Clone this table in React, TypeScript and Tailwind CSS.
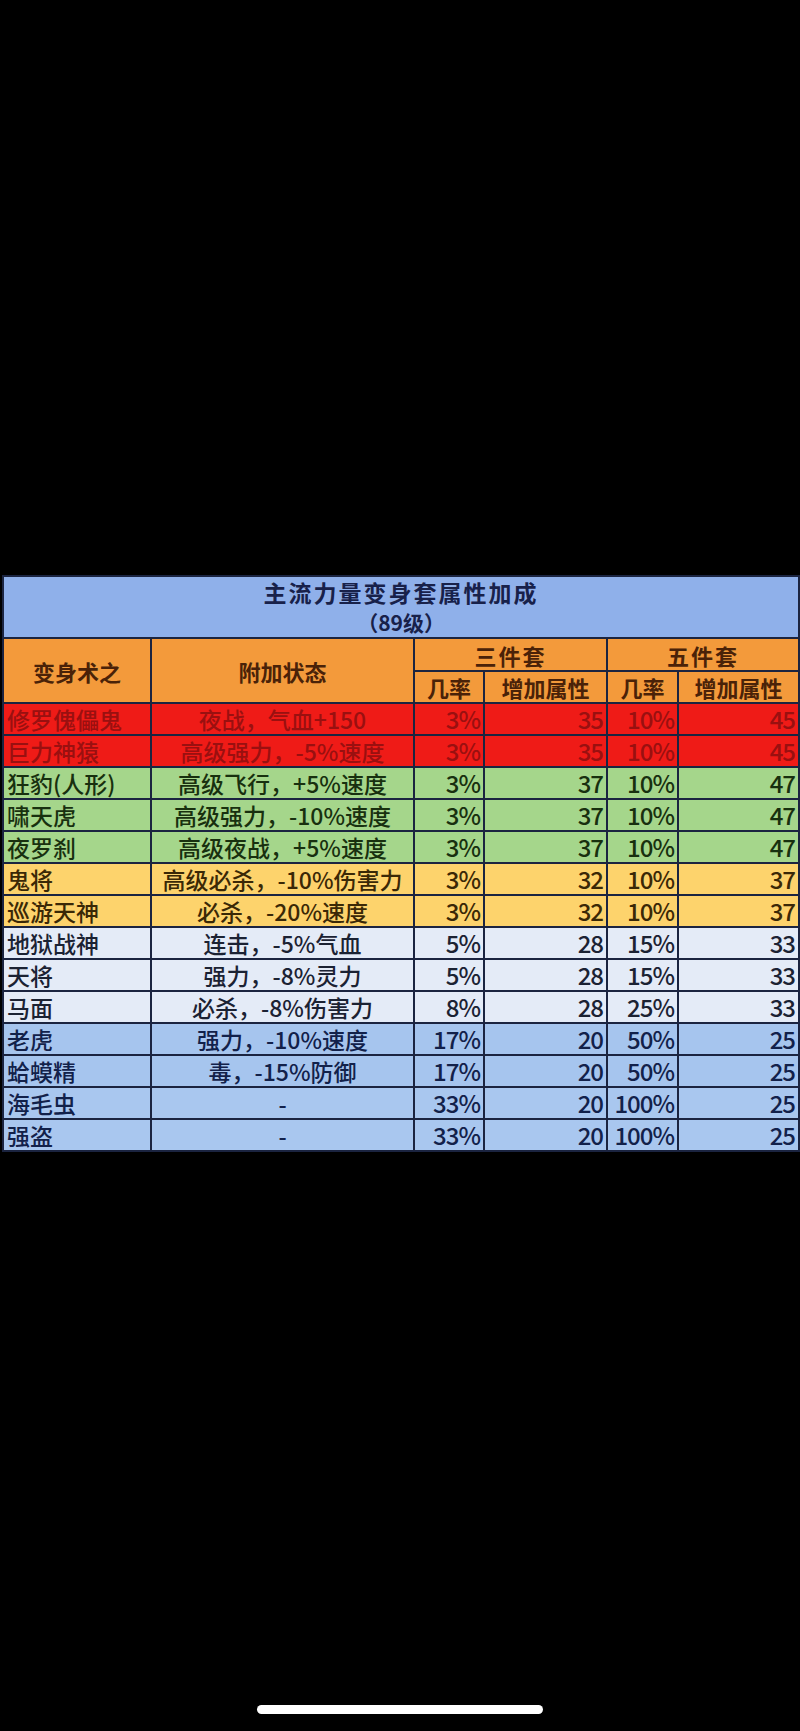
import React from "react";

type Row = {
  name: string;
  state: string;
  r3: string;
  a3: string;
  r5: string;
  a5: string;
  bg: string;
  fg: string;
};

const rows: Row[] = [
  { name: "修罗傀儡鬼", state: "夜战，气血+150", r3: "3%", a3: "35", r5: "10%", a5: "45", bg: "bg-[#ef1b17]", fg: "text-[#9a1010]" },
  { name: "巨力神猿", state: "高级强力，-5%速度", r3: "3%", a3: "35", r5: "10%", a5: "45", bg: "bg-[#ef1b17]", fg: "text-[#9a1010]" },
  { name: "狂豹(人形)", state: "高级飞行，+5%速度", r3: "3%", a3: "37", r5: "10%", a5: "47", bg: "bg-[#a5d68b]", fg: "text-[#18300f]" },
  { name: "啸天虎", state: "高级强力，-10%速度", r3: "3%", a3: "37", r5: "10%", a5: "47", bg: "bg-[#a5d68b]", fg: "text-[#18300f]" },
  { name: "夜罗刹", state: "高级夜战，+5%速度", r3: "3%", a3: "37", r5: "10%", a5: "47", bg: "bg-[#a5d68b]", fg: "text-[#18300f]" },
  { name: "鬼将", state: "高级必杀，-10%伤害力", r3: "3%", a3: "32", r5: "10%", a5: "37", bg: "bg-[#fdd36c]", fg: "text-[#3a2806]" },
  { name: "巡游天神", state: "必杀，-20%速度", r3: "3%", a3: "32", r5: "10%", a5: "37", bg: "bg-[#fdd36c]", fg: "text-[#3a2806]" },
  { name: "地狱战神", state: "连击，-5%气血", r3: "5%", a3: "28", r5: "15%", a5: "33", bg: "bg-[#e4ebf7]", fg: "text-[#1b2233]" },
  { name: "天将", state: "强力，-8%灵力", r3: "5%", a3: "28", r5: "15%", a5: "33", bg: "bg-[#e4ebf7]", fg: "text-[#1b2233]" },
  { name: "马面", state: "必杀，-8%伤害力", r3: "8%", a3: "28", r5: "25%", a5: "33", bg: "bg-[#e4ebf7]", fg: "text-[#1b2233]" },
  { name: "老虎", state: "强力，-10%速度", r3: "17%", a3: "20", r5: "50%", a5: "25", bg: "bg-[#a6c5ee]", fg: "text-[#12214a]" },
  { name: "蛤蟆精", state: "毒，-15%防御", r3: "17%", a3: "20", r5: "50%", a5: "25", bg: "bg-[#a6c5ee]", fg: "text-[#12214a]" },
  { name: "海毛虫", state: "-", r3: "33%", a3: "20", r5: "100%", a5: "25", bg: "bg-[#a9c7ef]", fg: "text-[#12214a]" },
  { name: "强盗", state: "-", r3: "33%", a3: "20", r5: "100%", a5: "25", bg: "bg-[#a9c7ef]", fg: "text-[#12214a]" },
];

const font = { fontFamily: '"Noto Sans CJK SC", "Noto Sans", sans-serif' };

export default function App() {
  const cell = "border-2 border-[#1b2440] p-0 h-[32px] leading-none whitespace-nowrap";
  const num = `${cell} text-right text-[24px] tracking-[-1px] pr-[3px]`;
  return (
    <div className="w-[800px] h-[1731px] bg-black flex flex-col items-center" style={font}>
      <div className="mt-[575px] w-[796px]">
        <table className="border-collapse table-fixed w-[796px] border-2 border-[#1b2440]">
          <colgroup>
            <col className="w-[148px]" />
            <col className="w-[263px]" />
            <col className="w-[70px]" />
            <col className="w-[123px]" />
            <col className="w-[71px]" />
            <col className="w-[121px]" />
          </colgroup>
          <tbody>
            <tr>
              <td colSpan={6} className="border-2 border-[#1b2440] bg-[#8fb0ea] h-[62px] p-0 text-center text-[#18214a]">
                <div className="flex flex-col items-center justify-center gap-[4px]">
                  <div className="text-[23px] font-bold leading-[26px] tracking-[2px]">主流力量变身套属性加成</div>
                  <div className="text-[21px] font-bold leading-[26px]">（89级）</div>
                </div>
              </td>
            </tr>
            <tr className="bg-[#f39a3b] text-[#4a2208] font-bold">
              <td rowSpan={2} className={`${cell} text-center text-[22px]`}>变身术之</td>
              <td rowSpan={2} className={`${cell} text-center text-[22px]`}>附加状态</td>
              <td colSpan={2} className={`${cell} h-[33px] text-center text-[22px] tracking-[2px]`}>三件套</td>
              <td colSpan={2} className={`${cell} h-[33px] text-center text-[22px] tracking-[2px]`}>五件套</td>
            </tr>
            <tr className="bg-[#f39a3b] text-[#4a2208] font-bold">
              <td className={`${cell} text-center text-[22px]`}>几率</td>
              <td className={`${cell} text-center text-[22px]`}>增加属性</td>
              <td className={`${cell} text-center text-[22px]`}>几率</td>
              <td className={`${cell} text-center text-[22px]`}>增加属性</td>
            </tr>
            {rows.map((r) => (
              <tr key={r.name} className={`${r.bg} ${r.fg} font-medium`}>
                <td className={`${cell} text-left pl-[3px] text-[23px]`}>{r.name}</td>
                <td className={`${cell} text-center text-[23px]`}>{r.state}</td>
                <td className={num}>{r.r3}</td>
                <td className={num}>{r.a3}</td>
                <td className={num}>{r.r5}</td>
                <td className={num}>{r.a5}</td>
              </tr>
            ))}
          </tbody>
        </table>
      </div>
      <div className="mt-[553px] w-[286px] h-[9px] rounded-full bg-white" />
    </div>
  );
}
